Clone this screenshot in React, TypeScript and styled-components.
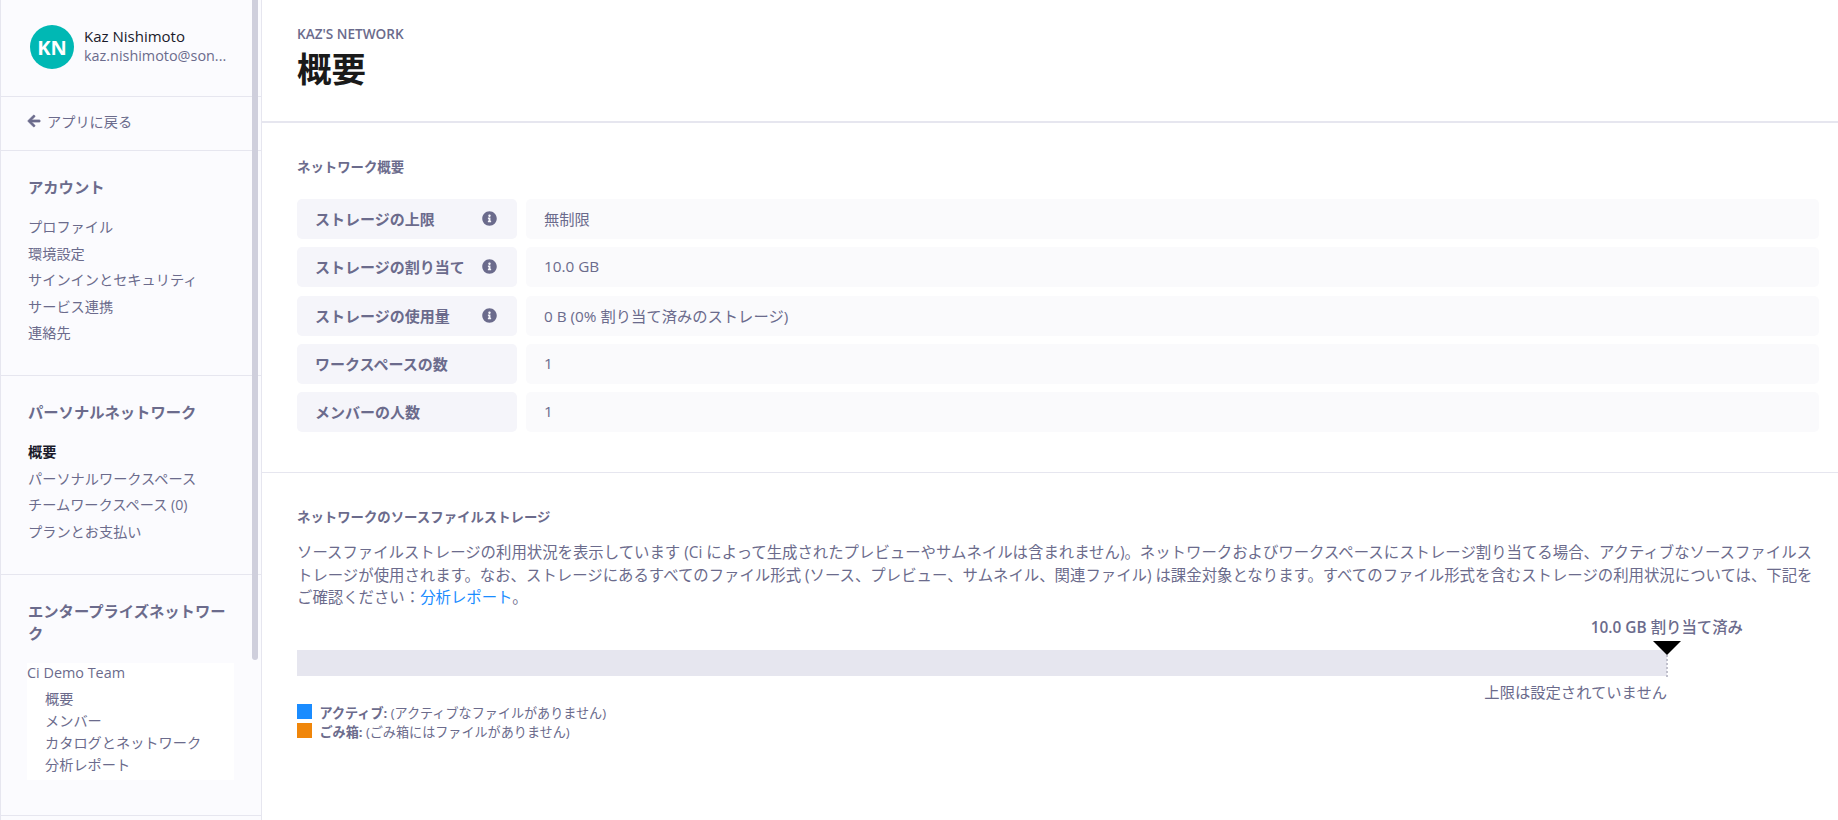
import React from "react";
import styled, { createGlobalStyle } from "styled-components";
import { FaArrowLeft, FaInfoCircle } from "react-icons/fa";

const FONT = `"Open Sans", "Noto Sans CJK JP", sans-serif`;
const MUTED = "#6b6b8c";
const LINE = "#e6e6ef";

const Global = createGlobalStyle`
  html, body { margin: 0; padding: 0; height: 100%; overflow: hidden; background: #fff; }
  body { font-family: ${FONT}; color: ${MUTED}; }
  * { box-sizing: border-box; }
`;

const Page = styled.div`
  display: flex;
  width: 100%;
  height: 820px;
  overflow: hidden;
`;

const Sidebar = styled.aside`
  position: relative;
  flex: 0 0 262px;
  height: 820px;
  overflow: hidden;
  background: #fbfbfe;
  border-left: 1px solid ${LINE};
  border-right: 1px solid ${LINE};
`;

const Thumb = styled.div`
  position: absolute;
  top: 0;
  left: 251px;
  width: 6px;
  height: 660px;
  border-radius: 0 0 3px 3px;
  background: #cfcfdc;
`;

const Profile = styled.div`
  display: flex;
  align-items: center;
  gap: 10px;
  height: 97px;
  padding: 0 22px 2px 29px;
  border-bottom: 1px solid ${LINE};
`;

const Avatar = styled.div`
  flex: 0 0 44px;
  height: 44px;
  display: flex;
  align-items: center;
  justify-content: center;
  border-radius: 50%;
  background: #00b8b4;
  color: #fff;
  font-size: 20px;
  font-weight: 700;
`;

const ProfileText = styled.div`
  min-width: 0;
  flex: 1;
  padding-bottom: 2px;
  line-height: 20px;
`;

const Name = styled.div`
  font-size: 15px;
  color: #1a1a2a;
`;

const Email = styled.div`
  font-size: 14.4px;
  white-space: nowrap;
`;

const BackRow = styled.div`
  display: flex;
  align-items: center;
  gap: 6px;
  height: 54px;
  padding: 0 0 5px 26px;
  font-size: 14.2px;
  border-bottom: 1px solid ${LINE};
`;

const BackArrow = styled(FaArrowLeft)`
  stroke: currentColor;
  stroke-width: 24px;
`;

const NavSection = styled.section<{ $height: number }>`
  height: ${(p) => p.$height}px;
  padding: 25px 26px 0 27px;
  border-bottom: 1px solid ${LINE};
`;

const NavTitle = styled.h3`
  margin: 0 0 16px;
  font-size: 15.3px;
  line-height: 22px;
  font-weight: 700;
  color: ${MUTED};
`;

const NavItem = styled.div<{ $active?: boolean }>`
  font-size: 14.2px;
  line-height: 26.5px;
  white-space: nowrap;
  font-weight: ${(p) => (p.$active ? 700 : 400)};
  color: ${(p) => (p.$active ? "#1a1a2a" : MUTED)};
`;

const TeamCard = styled.div`
  width: 207px;
  height: 117px;
  margin: 19px 0 0 -1px;
  background: #fff;
`;

const TeamName = styled.div`
  margin-bottom: 5px;
  font-size: 14.4px;
  line-height: 20px;
  white-space: nowrap;
`;

const TeamItem = styled.div`
  padding-left: 18px;
  font-size: 14.2px;
  line-height: 22px;
  white-space: nowrap;
`;

const Main = styled.main`
  flex: 1;
  min-width: 0;
  height: 820px;
  overflow: hidden;
  background: #fff;
`;

const Header = styled.header`
  height: 123px;
  padding: 24px 35px 0;
  border-bottom: 2px solid ${LINE};
`;

const Eyebrow = styled.div`
  font-size: 13.6px;
  line-height: 20px;
  font-weight: 600;
  color: ${MUTED};
`;

const PageTitle = styled.h1`
  margin: 1px 0 0;
  font-size: 34.5px;
  line-height: 48px;
  font-weight: 700;
  color: #1a1a1a;
`;

const Section = styled.section`
  padding: 0 19px 0 35px;
`;

const OverviewSection = styled(Section)`
  height: 350px;
  padding-top: 34px;
  border-bottom: 1px solid ${LINE};
`;

const SectionTitle = styled.h2`
  margin: 0 0 22px;
  font-size: 13.4px;
  line-height: 20px;
  font-weight: 700;
  color: ${MUTED};
`;

const Rows = styled.div`
  display: grid;
  grid-template-columns: 220px 1fr;
  grid-auto-rows: 40px;
  column-gap: 9px;
  row-gap: 8.25px;
`;

const RowLabel = styled.div`
  display: flex;
  align-items: center;
  justify-content: space-between;
  padding: 0 20px 1px 18px;
  border-radius: 5px;
  background: #f5f5fa;
  font-size: 15px;
  font-weight: 700;
  white-space: nowrap;
`;

const RowValue = styled.div`
  display: flex;
  align-items: center;
  padding: 0 18px 2px;
  border-radius: 5px;
  background: #fafafc;
  font-size: 15.3px;
`;

const StorageSection = styled(Section)`
  padding-top: 34px;
`;

const Para = styled.p`
  margin: -7px 0 0;
  font-size: 15.4px;
  line-height: 22.7px;
  color: ${MUTED};
`;

const Link = styled.a`
  color: #1a8cff;
`;

const Meter = styled.div`
  position: relative;
  margin-top: 40px;
  width: 1370px;
  height: 26px;
  background: #e6e6ef;
`;

const MeterTop = styled.div`
  position: absolute;
  right: -76px;
  bottom: 38px;
  font-size: 15.4px;
  line-height: 20px;
  font-weight: 500;
  white-space: nowrap;
`;

const MeterAmount = styled.span`
  font-weight: 600;
`;

const Caret = styled.div`
  position: absolute;
  right: -14px;
  top: -9px;
  width: 0;
  height: 0;
  border-left: 14px solid transparent;
  border-right: 14px solid transparent;
  border-top: 14px solid #000;
`;

const Dots = styled.div`
  position: absolute;
  right: -1px;
  top: 5px;
  height: 22px;
  border-right: 2px dotted #c0c0cc;
`;

const MeterBottom = styled.div`
  margin-top: 6px;
  width: 1370px;
  text-align: right;
  font-size: 15.3px;
  line-height: 20px;
`;

const Legend = styled.div`
  margin-top: 2px;
  display: flex;
  flex-direction: column;
  gap: 4px;
`;

const LegendRow = styled.div`
  display: flex;
  align-items: center;
  gap: 7.5px;
  height: 15px;
  font-size: 13.1px;
  white-space: nowrap;
`;

const LegendText = styled.span`
  padding-top: 2px;
`;

const Swatch = styled.span<{ $color: string }>`
  flex: 0 0 15px;
  height: 15px;
  background: ${(p) => p.$color};
`;

const rows: [string, string, boolean][] = [
  ["ストレージの上限", "無制限", true],
  ["ストレージの割り当て", "10.0 GB", true],
  ["ストレージの使用量", "0 B (0% 割り当て済みのストレージ)", true],
  ["ワークスペースの数", "1", false],
  ["メンバーの人数", "1", false],
];

export default function App() {
  return (
    <Page>
      <Global />
      <Sidebar>
        <Profile>
          <Avatar>KN</Avatar>
          <ProfileText>
            <Name>Kaz Nishimoto</Name>
            <Email>kaz.nishimoto@son...</Email>
          </ProfileText>
        </Profile>
        <BackRow>
          <BackArrow size={14} />
          アプリに戻る
        </BackRow>
        <NavSection $height={225}>
          <NavTitle>アカウント</NavTitle>
          <NavItem>プロファイル</NavItem>
          <NavItem>環境設定</NavItem>
          <NavItem>サインインとセキュリティ</NavItem>
          <NavItem>サービス連携</NavItem>
          <NavItem>連絡先</NavItem>
        </NavSection>
        <NavSection $height={199}>
          <NavTitle>パーソナルネットワーク</NavTitle>
          <NavItem $active>概要</NavItem>
          <NavItem>パーソナルワークスペース</NavItem>
          <NavItem>チームワークスペース (0)</NavItem>
          <NavItem>プランとお支払い</NavItem>
        </NavSection>
        <NavSection $height={241}>
          <NavTitle>エンタープライズネットワーク</NavTitle>
          <TeamCard>
            <TeamName>Ci Demo Team</TeamName>
            <TeamItem>概要</TeamItem>
            <TeamItem>メンバー</TeamItem>
            <TeamItem>カタログとネットワーク</TeamItem>
            <TeamItem>分析レポート</TeamItem>
          </TeamCard>
        </NavSection>
        <Thumb />
      </Sidebar>
      <Main>
        <Header>
          <Eyebrow>KAZ'S NETWORK</Eyebrow>
          <PageTitle>概要</PageTitle>
        </Header>
        <OverviewSection>
          <SectionTitle>ネットワーク概要</SectionTitle>
          <Rows>
            {rows.map(([label, value, info]) => (
              <React.Fragment key={label}>
                <RowLabel>
                  {label}
                  {info && <FaInfoCircle size={15} />}
                </RowLabel>
                <RowValue>{value}</RowValue>
              </React.Fragment>
            ))}
          </Rows>
        </OverviewSection>
        <StorageSection>
          <SectionTitle>ネットワークのソースファイルストレージ</SectionTitle>
          <Para>
            ソースファイルストレージの利用状況を表示しています (Ci によって生成されたプレビューやサムネイルは含まれません)。ネットワークおよびワークスペースにストレージ割り当てる場合、アクティブなソースファイルストレージが使用されます。なお、ストレージにあるすべてのファイル形式 (ソース、プレビュー、サムネイル、関連ファイル) は課金対象となります。すべてのファイル形式を含むストレージの利用状況については、下記をご確認ください：<Link>分析レポート</Link>。
          </Para>
          <Meter>
            <MeterTop><MeterAmount>10.0 GB</MeterAmount> 割り当て済み</MeterTop>
            <Dots />
            <Caret />
          </Meter>
          <MeterBottom>上限は設定されていません</MeterBottom>
          <Legend>
            <LegendRow>
              <Swatch $color="#1a8cff" />
              <LegendText><b>アクティブ:</b> (アクティブなファイルがありません)</LegendText>
            </LegendRow>
            <LegendRow>
              <Swatch $color="#f0860a" />
              <LegendText><b>ごみ箱:</b> (ごみ箱にはファイルがありません)</LegendText>
            </LegendRow>
          </Legend>
        </StorageSection>
      </Main>
    </Page>
  );
}
